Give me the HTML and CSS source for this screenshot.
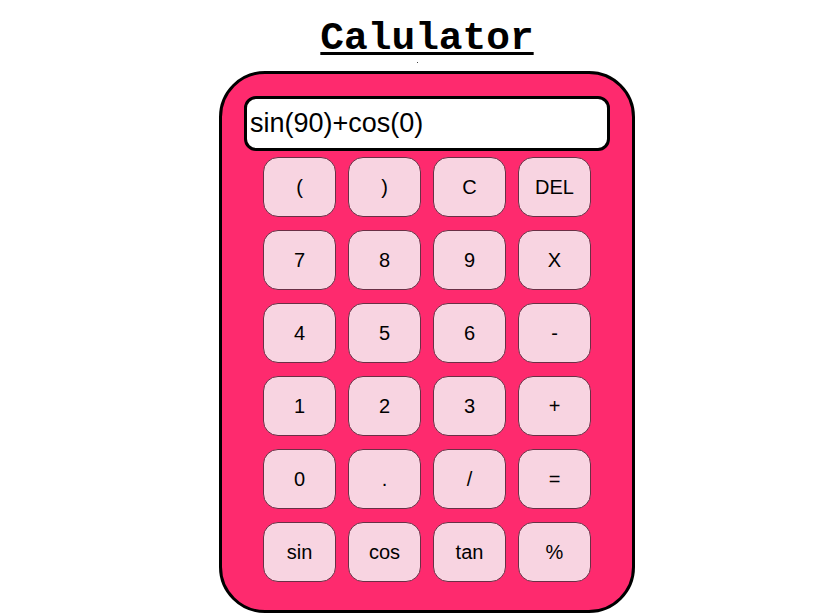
FILE: index.html
```html
<!DOCTYPE html>
<html lang="en">
<head>
<meta charset="utf-8">
<title>Calulator</title>
<link rel="stylesheet" href="styles.css">
</head>
<body>
<div class="page">
  <h1 class="title">Calulator</h1>
  <div class="dot"></div>
  <div class="calc">
    <div class="display">sin(90)+cos(0)</div>
    <div class="keys">
      <button class="key">(</button>
      <button class="key">)</button>
      <button class="key">C</button>
      <button class="key">DEL</button>
      <button class="key">7</button>
      <button class="key">8</button>
      <button class="key">9</button>
      <button class="key">X</button>
      <button class="key">4</button>
      <button class="key">5</button>
      <button class="key">6</button>
      <button class="key">-</button>
      <button class="key">1</button>
      <button class="key">2</button>
      <button class="key">3</button>
      <button class="key">+</button>
      <button class="key">0</button>
      <button class="key">.</button>
      <button class="key">/</button>
      <button class="key">=</button>
      <button class="key">sin</button>
      <button class="key">cos</button>
      <button class="key">tan</button>
      <button class="key">%</button>
    </div>
  </div>
</div>
</body>
</html>
```
FILE: styles.css
```css
html, body {
  margin: 0;
  padding: 0;
  background: #ffffff;
}

.page {
  padding: 16px 0 0 32px;
  display: flex;
  flex-direction: column;
  align-items: center;
  font-family: "Liberation Sans", Arial, sans-serif;
}

.title {
  margin: 0;
  font-family: "Liberation Mono", "Courier New", monospace;
  font-weight: bold;
  font-size: 39.5px;
  line-height: 45px;
  height: 45px;
  text-decoration: underline;
  text-decoration-thickness: 3px;
  text-underline-offset: 3px;
  color: #000;
}

.dot {
  align-self: flex-start;
  width: 1px;
  height: 1px;
  margin: 1px 0 0 385px;
  background: #444;
}

.calc {
  box-sizing: border-box;
  width: 416px;
  height: 542px;
  margin-top: 8px;
  padding: 22px 22px 28px;
  background: #fe2a6e;
  border: 3px solid #000;
  border-radius: 46px;
  display: flex;
  flex-direction: column;
  align-items: center;
}

.display {
  box-sizing: border-box;
  width: 366px;
  height: 55px;
  background: #fff;
  border: 3px solid #000;
  border-radius: 12px;
  padding: 0 3px;
  display: flex;
  align-items: center;
  font-size: 27px;
  color: #000;
}

.keys {
  margin-top: 6px;
  display: grid;
  grid-template-columns: repeat(4, 73px);
  grid-auto-rows: 60px;
  column-gap: 12px;
  row-gap: 13px;
}

.key {
  box-sizing: border-box;
  margin: 0;
  padding: 0;
  background: #f8d4e1;
  border: 1px solid #6a2f45;
  border-radius: 15px;
  font-family: "Liberation Sans", Arial, sans-serif;
  font-size: 20px;
  color: #000;
  display: flex;
  align-items: center;
  justify-content: center;
}
```
